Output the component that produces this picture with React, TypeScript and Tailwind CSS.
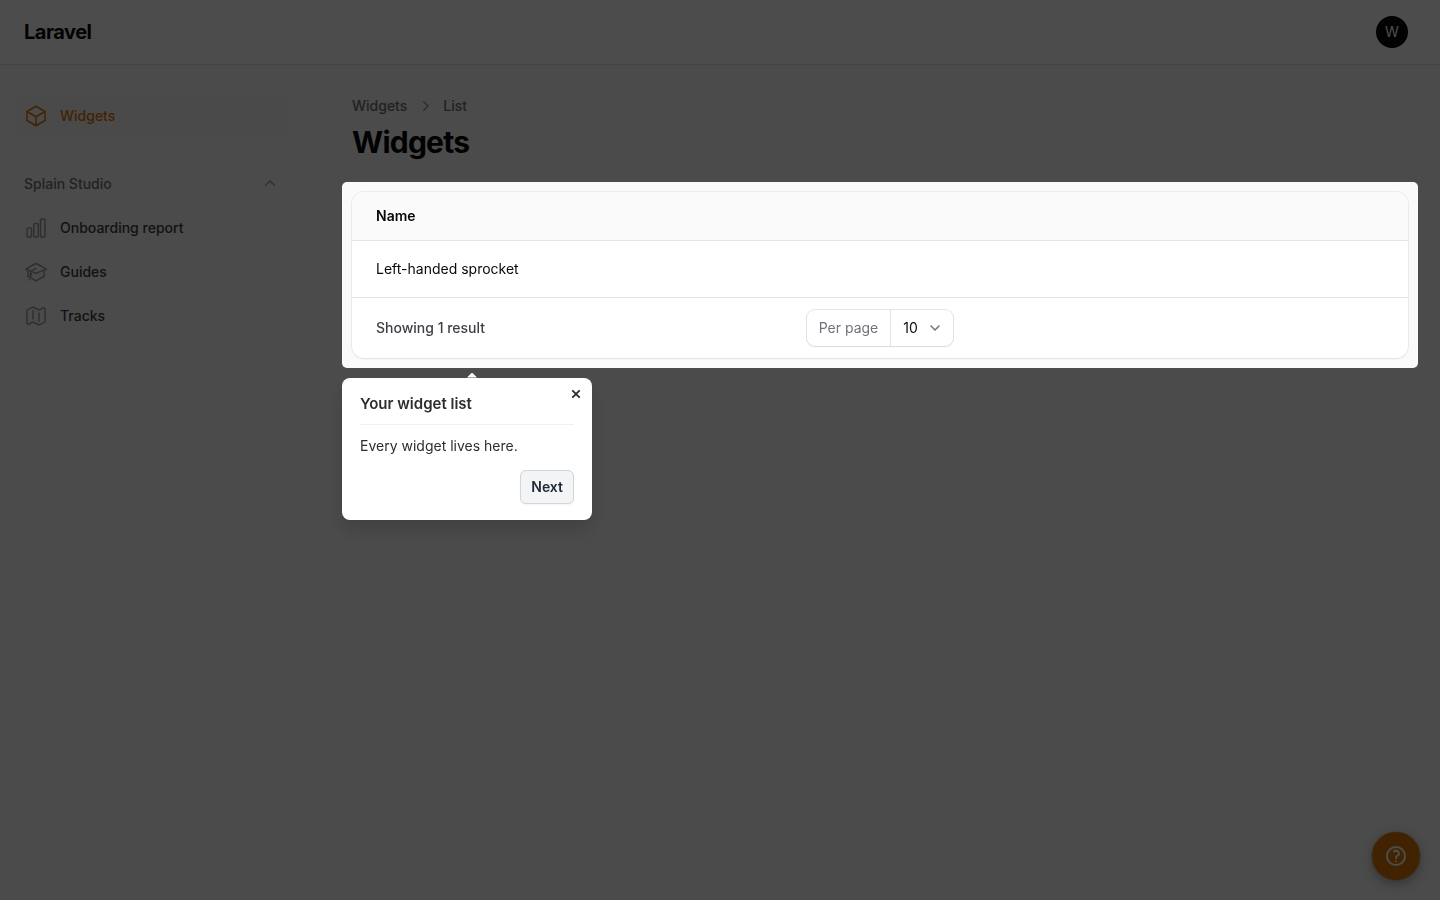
import {
  HiOutlineCube,
  HiOutlineChartBar,
  HiOutlineAcademicCap,
  HiOutlineMap,
} from "react-icons/hi2";
import type { IconType } from "react-icons";

const studioLinks: { label: string; icon: IconType }[] = [
  { label: "Onboarding report", icon: HiOutlineChartBar },
  { label: "Guides", icon: HiOutlineAcademicCap },
  { label: "Tracks", icon: HiOutlineMap },
];

function Topbar() {
  return (
    <header className="flex h-16 items-center justify-between bg-white pr-8 pl-6 shadow-xs ring-1 ring-[#09090b]/5">
      <a href="#" className="text-xl leading-5 font-bold tracking-tight text-[#09090b]">
        Laravel
      </a>
      <button
        type="button"
        aria-label="User menu"
        className="flex size-8 items-center justify-center rounded-full bg-[#09090b] text-sm text-white"
      >
        W
      </button>
    </header>
  );
}

function Sidebar() {
  return (
    <nav aria-label="Main" className="flex w-80 shrink-0 flex-col gap-7 py-8 pr-8 pl-4">
      <a
        href="#"
        className="flex items-center gap-3 rounded-lg bg-[#f7f7f7] p-2 text-sm font-medium text-[#d97706]"
      >
        <HiOutlineCube className="size-6 text-[#d97706]" />
        Widgets
      </a>
      <div className="flex flex-col gap-1">
        <button
          type="button"
          className="flex h-10 items-center justify-between px-2 text-sm font-medium text-[#71717b]"
        >
          Splain Studio
          <svg viewBox="0 0 20 20" fill="#9f9fa9" className="size-5" aria-hidden="true">
            <path
              fillRule="evenodd"
              clipRule="evenodd"
              d="M9.47 6.47a.75.75 0 0 1 1.06 0l4.25 4.25a.75.75 0 1 1-1.06 1.06L10 8.06l-3.72 3.72a.75.75 0 0 1-1.06-1.06l4.25-4.25Z"
            />
          </svg>
        </button>
        {studioLinks.map(({ label, icon: Icon }) => (
          <a
            key={label}
            href="#"
            className="flex items-center gap-3 rounded-lg p-2 text-sm font-medium text-[#3f3f46]"
          >
            <Icon className="size-6 text-[#9f9fa9]" />
            {label}
          </a>
        ))}
      </div>
    </nav>
  );
}

function PerPage() {
  return (
    <div className="flex h-9 items-center rounded-lg bg-white shadow-xs ring-1 ring-[#09090b]/10">
      <label
        htmlFor="per-page"
        className="flex h-full items-center border-r border-[#e4e4e7] px-3 text-sm text-[#71717b]"
      >
        Per page
      </label>
      <div className="relative flex h-full items-center">
        <select
          id="per-page"
          defaultValue="10"
          className="h-full w-[62px] appearance-none bg-transparent pl-3 text-sm text-[#09090b]"
        >
          <option>5</option>
          <option>10</option>
          <option>25</option>
          <option>50</option>
        </select>
        <svg
          viewBox="0 0 20 20"
          fill="none"
          stroke="#6b7280"
          strokeWidth="1.5"
          strokeLinecap="round"
          strokeLinejoin="round"
          className="pointer-events-none absolute right-2 size-5"
          aria-hidden="true"
        >
          <path d="m6 8 4 4 4-4" />
        </svg>
      </div>
    </div>
  );
}

function TourPopover() {
  return (
    <div
      role="dialog"
      aria-labelledby="tour-title"
      className="absolute top-full left-0 mt-[10px] w-[250px] rounded-lg bg-white px-[18px] py-4 text-[#2d2d2d] shadow-[0_10px_20px_rgba(0,0,0,0.15)]"
    >
      <span className="absolute -top-[5px] left-[125px] h-[5px] w-[10px] bg-white [clip-path:polygon(50%_0,100%_100%,0_100%)]" />
      <button
        type="button"
        aria-label="Close"
        className="absolute top-0 right-0 flex h-8 w-8 items-center justify-center"
      >
        <svg
          viewBox="0 0 10 10"
          fill="none"
          stroke="#2d2d2d"
          strokeWidth="1.8"
          className="size-[10px]"
          aria-hidden="true"
        >
          <path d="m1.3 1.3 7.4 7.4m0-7.4L1.3 8.7" />
        </svg>
      </button>
      <h2 id="tour-title" className="border-b border-[#f0f0f1] pb-2.5 text-[15px] leading-5 font-semibold">
        Your widget list
      </h2>
      <p className="mt-[11px] text-sm leading-5">Every widget lives here.</p>
      <div className="mt-[14px] flex justify-end">
        <button
          type="button"
          className="h-[34px] rounded-md border border-[#d1d5db] bg-[#f3f4f6] px-[10px] text-sm font-semibold text-[#1f2937] shadow-xs"
        >
          Next
        </button>
      </div>
    </div>
  );
}

function WidgetTable() {
  return (
    <section className="relative z-20 -mx-[10px] mt-[22px] rounded-[5px] bg-[#fafafa] p-[10px] shadow-[0_0_0_9999px_rgba(0,0,0,0.7)]">
      <div className="overflow-hidden rounded-xl bg-white shadow-xs ring-1 ring-[#09090b]/5">
        <table className="w-full text-left text-sm text-[#09090b]">
          <thead className="bg-[#fafafa]">
            <tr>
              <th scope="col" className="h-12 px-6 font-semibold">
                Name
              </th>
            </tr>
          </thead>
          <tbody className="border-y border-[#e4e4e7]">
            <tr>
              <td className="h-[57px] px-6">Left-handed sprocket</td>
            </tr>
          </tbody>
        </table>
        <div className="grid grid-cols-[1fr_auto_1fr] items-center px-6 py-3">
          <span className="text-sm font-medium text-[#3f3f46]">Showing 1 result</span>
          <PerPage />
        </div>
      </div>
      <TourPopover />
    </section>
  );
}

export default function App() {
  return (
    <div className="min-h-screen overflow-x-hidden bg-[#fafafa] font-['Inter',sans-serif]">
      <Topbar />
      <div className="flex">
        <Sidebar />
        <main className="min-w-0 flex-1 px-8 py-8">
          <nav
            aria-label="Breadcrumb"
            className="mb-2 flex items-center gap-2 text-sm font-medium text-[#71717b]"
          >
            <a href="#">Widgets</a>
            <svg viewBox="0 0 20 20" fill="#9f9fa9" className="size-5" aria-hidden="true">
              <path
                fillRule="evenodd"
                clipRule="evenodd"
                d="M8.22 5.22a.75.75 0 0 1 1.06 0l4.25 4.25a.75.75 0 0 1 0 1.06l-4.25 4.25a.75.75 0 0 1-1.06-1.06L11.94 10 8.22 6.28a.75.75 0 0 1 0-1.06Z"
              />
            </svg>
            <a href="#">List</a>
          </nav>
          <h1 className="text-3xl font-bold tracking-tight text-[#09090b]">Widgets</h1>
          <WidgetTable />
        </main>
      </div>
      <button
        type="button"
        aria-label="Help"
        className="fixed right-5 bottom-5 z-10 flex size-12 items-center justify-center rounded-full bg-[#d97706] text-white shadow-[0_0_2px_rgba(0,0,0,0.3),0_4px_12px_rgba(0,0,0,0.3)]"
      >
        <svg
          viewBox="0 0 24 24"
          fill="none"
          stroke="currentColor"
          strokeWidth="2"
          strokeLinecap="round"
          strokeLinejoin="round"
          className="size-6"
          aria-hidden="true"
        >
          <path d="M9.879 7.519c1.171-1.025 3.071-1.025 4.242 0 1.172 1.025 1.172 2.687 0 3.712-.203.179-.43.326-.67.442-.745.361-1.45.999-1.45 1.827v.75M21 12a9 9 0 1 1-18 0 9 9 0 0 1 18 0Zm-9 5.25h.008v.008H12v-.008Z" />
        </svg>
      </button>
    </div>
  );
}
